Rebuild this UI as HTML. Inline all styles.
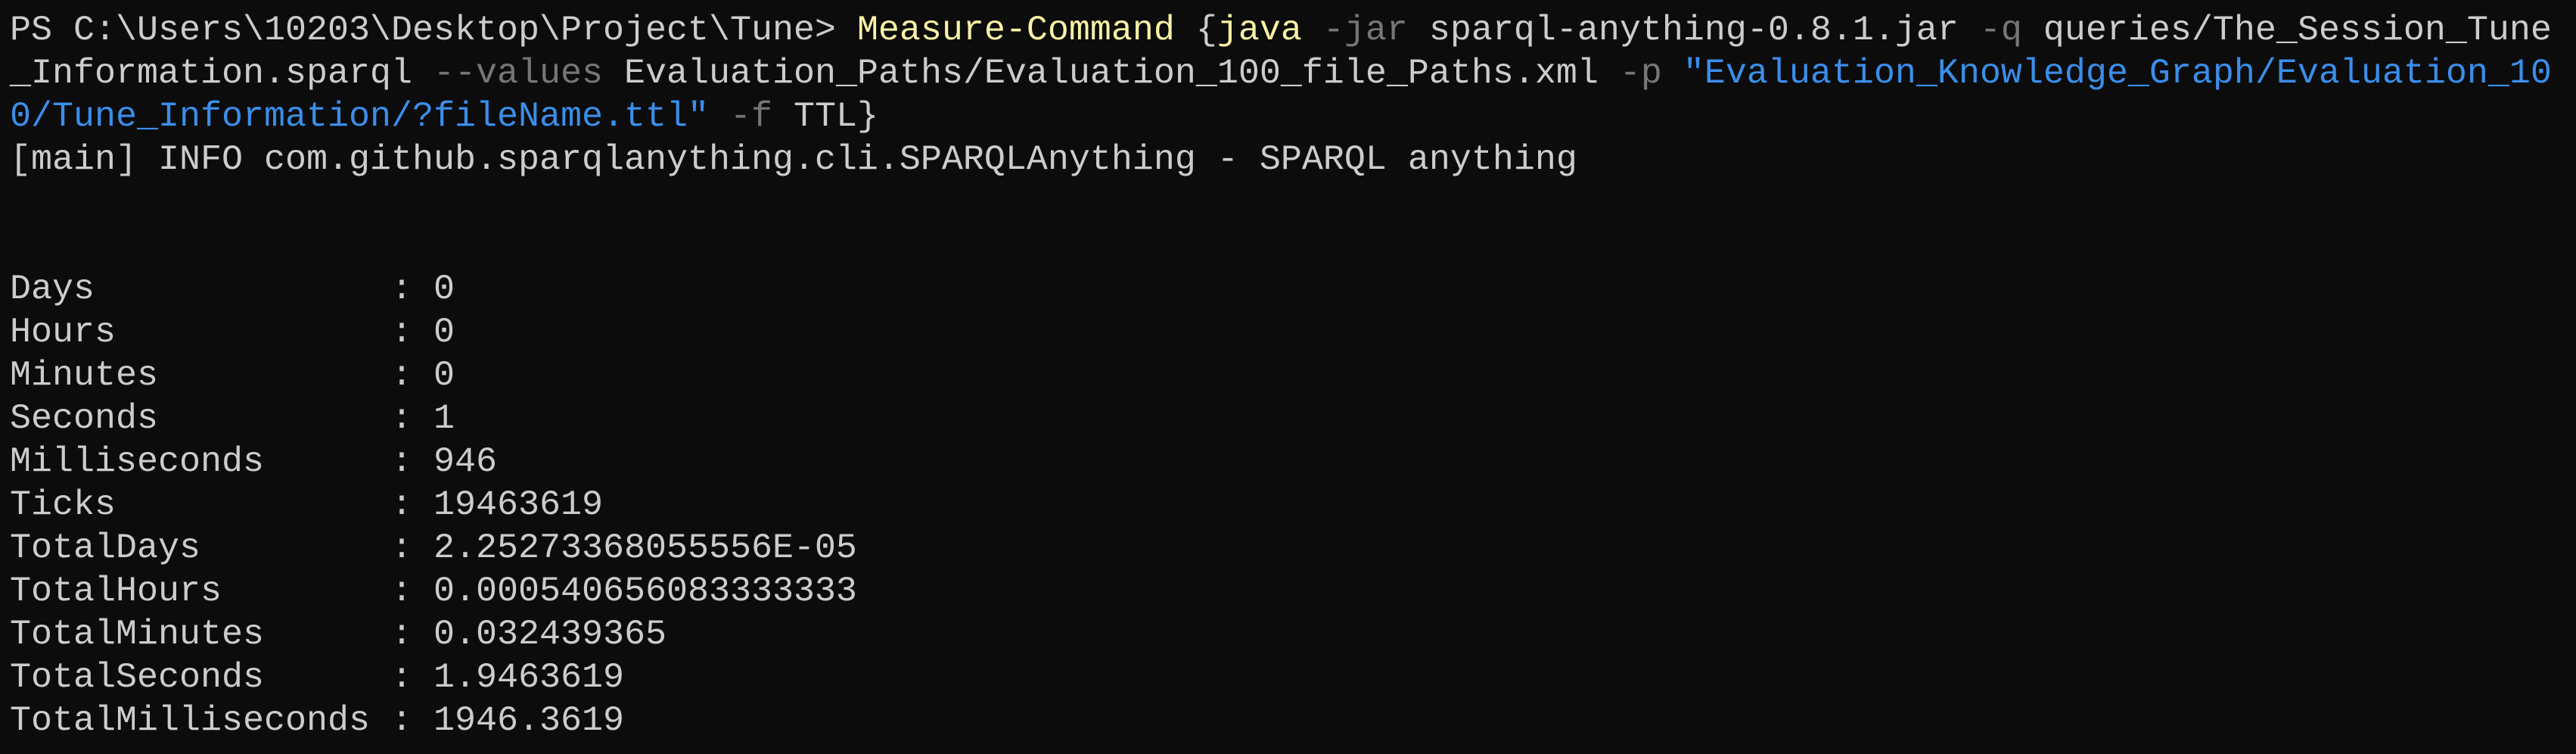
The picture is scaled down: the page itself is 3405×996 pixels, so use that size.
<!DOCTYPE html>
<html><head><meta charset="utf-8"><style>
html,body{margin:0;padding:0;background:#0c0c0c;width:3405px;height:996px;overflow:hidden}
pre{margin:0;position:absolute;left:13px;top:12px;font-family:"Liberation Mono",monospace;font-size:46.67px;line-height:57px;color:#cccccc;white-space:pre}
.y{color:#f9f1a5}.g{color:#767676}.b{color:#3b8eea}
</style></head><body><pre>PS C:\Users\10203\Desktop\Project\Tune&gt; <span class="y">Measure-Command</span> {<span class="y">java</span> <span class="g">-jar</span> sparql-anything-0.8.1.jar <span class="g">-q</span> queries/The_Session_Tune
_Information.sparql <span class="g">--values</span> Evaluation_Paths/Evaluation_100_file_Paths.xml <span class="g">-p</span> <span class="b">"Evaluation_Knowledge_Graph/Evaluation_10</span>
<span class="b">0/Tune_Information/?fileName.ttl"</span> <span class="g">-f</span> TTL}
[main] INFO com.github.sparqlanything.cli.SPARQLAnything - SPARQL anything


Days              : 0
Hours             : 0
Minutes           : 0
Seconds           : 1
Milliseconds      : 946
Ticks             : 19463619
TotalDays         : 2.25273368055556E-05
TotalHours        : 0.000540656083333333
TotalMinutes      : 0.032439365
TotalSeconds      : 1.9463619
TotalMilliseconds : 1946.3619</pre></body></html>
